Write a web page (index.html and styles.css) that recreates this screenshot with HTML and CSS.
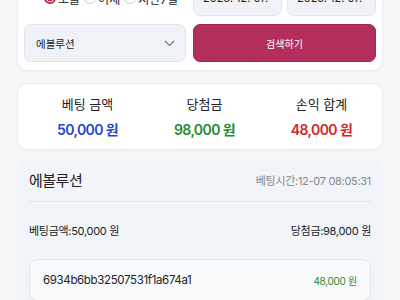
FILE: index.html
```html
<!DOCTYPE html>
<html lang="ko">

<head>
    <meta charset="utf-8">
    <title>베팅 내역</title>
    <link rel="stylesheet" href="styles.css">
</head>

<body>

    <div id="page">

        <div id="filter" class="card">
            <div class="radios">
                <label class="radio"><span class="dot checked"></span>오늘</label>
                <label class="radio"><span class="dot"></span>어제</label>
                <label class="radio"><span class="dot"></span>지난7일</label>
            </div>
            <div class="dates">
                <div class="date">2025. 12. 07.</div>
                <div class="date">2025. 12. 07.</div>
            </div>
            <div class="select">
                <span>에볼루션</span>
                <svg width="11" height="7" viewBox="0 0 11 7">
                    <path d="M1 1 L5.5 5.5 L10 1" fill="none" stroke="#777" stroke-width="1.2" />
                </svg>
            </div>
            <div class="button">검색하기</div>
        </div>

        <div id="summary" class="card">
            <div class="stat">
                <p class="label">베팅 금액</p>
                <p class="value blue">50,000 원</p>
            </div>
            <div class="stat">
                <p class="label">당첨금</p>
                <p class="value green">98,000 원</p>
            </div>
            <div class="stat">
                <p class="label">손익 합계</p>
                <p class="value red">48,000 원</p>
            </div>
        </div>

        <div id="detail">
            <div class="head">
                <span class="game">에볼루션</span>
                <span class="time">베팅시간:12-07 08:05:31</span>
            </div>
            <div class="amounts">
                <span>베팅금액:50,000 원</span>
                <span>당첨금:98,000 원</span>
            </div>
            <div class="ticket">
                <span class="hash">6934b6bb32507531f1a674a1</span>
                <span class="win">48,000 원</span>
            </div>
        </div>

    </div>

</body>

</html>
```

FILE: styles.css
```css
html,
body {
    margin: 0px;
    padding: 0px;
    background-color: #f6f7f9;
    color: #222;
    font-family: Inter, "Noto Sans CJK KR", sans-serif;
    overflow: hidden;
}

p {
    margin: 0px;
}

#page {
    padding: 0px 17px;
}

.card {
    background-color: #fff;
    border: 1px solid #e8eaee;
    border-radius: 10px;
    box-shadow: 0 1px 3px rgba(0, 0, 0, 0.04);
}

/* filter box */

#filter {
    margin-top: -31px;
    padding: 10px 6px 8px 6px;
    display: grid;
    grid-template-columns: 162px 1fr;
    grid-template-rows: 36px 38px;
    gap: 8px 7px;
}

.radios {
    display: flex;
    align-items: center;
    padding-left: 20px;
    font-size: 12px;
}

.radio {
    display: flex;
    align-items: center;
    margin-right: 4px;
}

.dot {
    width: 12px;
    height: 12px;
    border: 1px solid #cfd2d8;
    border-radius: 50%;
    margin-right: 2px;
    box-sizing: border-box;
    background-color: #fff;
}

.dot.checked {
    border: 2px solid #c4264f;
    background: radial-gradient(circle, #c4264f 0 3px, #fff 3.5px);
}

.dates {
    display: flex;
    gap: 5px;
}

.date {
    flex: 1;
    background-color: #eff2f7;
    border: 1px solid #e2e6ec;
    border-radius: 7px;
    padding-left: 9px;
    display: flex;
    align-items: center;
    font-size: 11px;
}

.select {
    background-color: #eff2f7;
    border: 1px solid #e2e6ec;
    border-radius: 7px;
    padding: 0px 10px 0px 11px;
    display: flex;
    align-items: center;
    justify-content: space-between;
    font-size: 10.5px;
}

.button {
    background-color: #b32e5c;
    border: 1px solid #a8234f;
    border-radius: 7px;
    color: #fff;
    display: flex;
    align-items: center;
    justify-content: center;
    font-size: 10px;
}

/* totals */

#summary {
    margin-top: 12px;
    height: 67px;
    padding: 11px 2px 0px 11px;
    box-sizing: border-box;
    display: grid;
    grid-template-columns: 1fr 1fr 1fr;
}

.stat {
    text-align: center;
}

.label {
    font-size: 13px;
    line-height: 18px;
}

.value {
    font-size: 14px;
    line-height: 18px;
    font-weight: 600;
    margin-top: 8px;
    letter-spacing: -0.6px;
}

.blue {
    color: #1f45d4;
}

.green {
    color: #27892f;
}

.red {
    color: #d32626;
}

/* bet detail */

#detail {
    margin-top: 8px;
    background-color: #f1f4f9;
    border-radius: 10px 10px 0px 0px;
    padding: 0px 12px 20px 12px;
}

.head {
    height: 43px;
    display: flex;
    align-items: center;
    justify-content: space-between;
    border-bottom: 1px solid #e1e4e9;
}

.game {
    font-size: 15px;
    letter-spacing: -0.5px;
}

.time {
    font-size: 11px;
    color: #888;
    letter-spacing: -0.3px;
}

.amounts {
    display: flex;
    justify-content: space-between;
    padding: 20px 0px 19px 0px;
    font-size: 11px;
    line-height: 18px;
    letter-spacing: -0.3px;
}

.ticket {
    background-color: #f8f9fb;
    border: 1px solid #e1e4e9;
    border-radius: 8px;
    height: 40px;
    padding: 0px 13px;
    display: flex;
    align-items: center;
    justify-content: space-between;
}

.hash {
    font-size: 11.5px;
    letter-spacing: -0.35px;
}

.win {
    font-size: 10px;
    color: #27892f;
    letter-spacing: -0.3px;
}
```
